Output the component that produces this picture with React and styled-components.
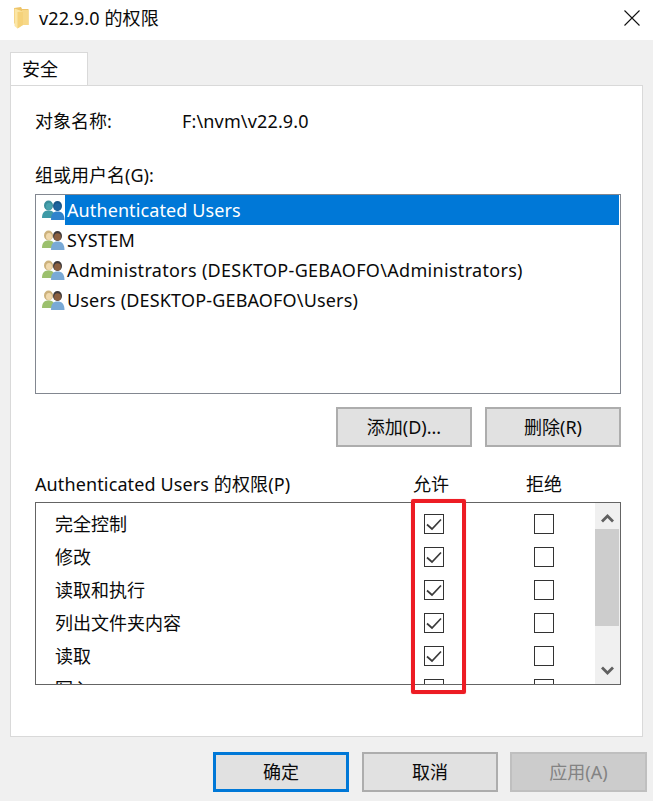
import React from 'react';
import styled, { createGlobalStyle } from 'styled-components';

const GlobalStyle = createGlobalStyle`
  html, body {
    margin: 0;
    padding: 0;
    background: #f0f0f0;
  }
  * {
    box-sizing: border-box;
  }
`;

const Dialog = styled.div`
  position: relative;
  width: 653px;
  height: 801px;
  overflow: hidden;
  background: #f0f0f0;
  color: #0a0a0a;
  font-family: 'Noto Sans', 'Noto Sans CJK SC', sans-serif;
  font-size: 18px;
`;

const TitleBar = styled.div`
  display: flex;
  align-items: center;
  height: 40px;
  padding: 0 13px 5px 14px;
  background: #fff;
`;

const TitleText = styled.span`
  flex: 1;
  margin-left: 10px;
  padding-bottom: 2px;
  letter-spacing: 0.1px;
`;

const TabStrip = styled.div`
  display: flex;
  height: 45px;
  padding: 12px 0 0 10px;
`;

const Tab = styled.div`
  width: 78px;
  height: 34px;
  padding-left: 11px;
  border: 1px solid #d9d9d9;
  border-bottom: 0;
  background: #fff;
  line-height: 33px;
`;

const Panel = styled.div`
  position: relative;
  width: 633px;
  height: 652px;
  margin-left: 10px;
  padding: 23px 21px 0 24px;
  border: 1px solid #d9d9d9;
  background: #fff;
`;

const Line = styled.div`
  height: 24px;
  margin-top: ${(p) => p.$top || 0}px;
  line-height: 24px;
`;

const ObjectName = styled(Line)`
  display: grid;
  grid-template-columns: 147px 1fr;
`;

const ObjectPath = styled.span`
  letter-spacing: 0.15px;
`;

const UserList = styled.div`
  height: 200px;
  margin-top: 7px;
  padding: 0 1px 0 6px;
  border: 1px solid #828790;
`;

const UserRow = styled.div`
  display: flex;
  align-items: center;
  height: 30px;
`;

const UserName = styled.div`
  flex: 1;
  height: 30px;
  padding-left: 2px;
  line-height: 30px;
  white-space: nowrap;
  letter-spacing: ${(p) => p.$tracking}px;
  background: ${(p) => (p.$selected ? '#0078d7' : 'transparent')};
  color: ${(p) => (p.$selected ? '#fff' : 'inherit')};
`;

const ListActions = styled.div`
  display: flex;
  justify-content: flex-end;
  gap: 13px;
  margin-top: 13px;
`;

const Button = styled.div`
  display: flex;
  align-items: center;
  justify-content: center;
  width: ${(p) => p.$width || 136}px;
  height: 40px;
  padding-bottom: 2px;
  border: 2px solid #adadad;
  background: #e1e1e1;
`;

const DefaultButton = styled(Button)`
  border-color: #0078d7;
  border-width: 3px;
`;

const DisabledButton = styled(Button)`
  margin-left: -1px;
  border-color: #bfbfbf;
  background: #cccccc;
  color: #838383;
`;

const PermHeader = styled.div`
  display: grid;
  grid-template-columns: 378px 36px 77px 36px;
  height: 24px;
  margin-top: 25px;
  line-height: 24px;
`;

const PermTitle = styled.span`
  letter-spacing: 0.12px;
`;

const PermTable = styled.div`
  display: flex;
  height: 183px;
  margin-top: 6px;
  border: 1px solid #646464;
`;

const PermRows = styled.div`
  flex: 1;
  display: flex;
  flex-direction: column;
  gap: 1px;
  padding-top: 5px;
  overflow: hidden;
`;

const PermRow = styled.div`
  flex: none;
  display: grid;
  grid-template-columns: 388px 20px 90px 20px;
  align-items: center;
  height: 32px;
`;

const PermName = styled.span`
  padding: 0 0 2px 19px;
`;

const CheckBox = styled.span`
  display: flex;
  align-items: center;
  justify-content: center;
  width: 20px;
  height: 20px;
  border: 1px solid #333;
  background: #fff;
`;

const ScrollBar = styled.div`
  flex: none;
  display: flex;
  flex-direction: column;
  align-items: flex-start;
  width: 25px;
  background: #f0f0f0;
`;

const ScrollArrow = styled.div`
  display: flex;
  align-items: ${(p) => (p.$down ? 'flex-end' : 'flex-start')};
  justify-content: center;
  width: 24px;
  height: ${(p) => p.$height}px;
  padding: ${(p) => (p.$down ? '0 0 9px' : '11px 0 0')};
`;

const ScrollThumb = styled.div`
  width: 24px;
  height: 97px;
  background: #cdcdcd;
`;

const Highlight = styled.div`
  position: absolute;
  left: 400px;
  top: 413px;
  width: 55px;
  height: 195px;
  border: 4px solid #ed1c24;
  border-radius: 2px;
  box-shadow: 0 0 1px rgba(237, 28, 36, 0.5);
`;

const Footer = styled.div`
  display: flex;
  justify-content: flex-end;
  gap: 13px;
  margin-top: 15px;
  padding-right: 6px;
`;

const FolderIcon = () => (
  <svg width="15" height="22" viewBox="0 0 15 22">
    <path d="M0 1 L7 0 L8 2 L14.5 2 L14.5 18 L2 18 L0 16 Z" fill="#eec468" />
    <path d="M8 3 L14.5 3 L14.5 18 L8 18 Z" fill="#f7d888" />
    <path d="M0.5 1.5 L9 4.5 L9 18 L3.5 21.5 L0.5 19 Z" fill="#fbe6a6" />
    <path d="M3.5 5 L9 4.5 L9 18 L3.5 21.5 Z" fill="#f5d27a" />
  </svg>
);

const CloseIcon = () => (
  <svg width="16" height="16" viewBox="0 0 16 16">
    <path d="M0.5 0.5 L15.5 15.5 M15.5 0.5 L0.5 15.5" stroke="#111" strokeWidth="1.1" fill="none" />
  </svg>
);

const GroupIcon = ({ selected }) => {
  const leftBody = selected ? '#3e9aa6' : '#9cc06e';
  const leftHair = selected ? '#3a8f9c' : '#cdb27c';
  const leftFace = selected ? '#4aa3ae' : '#f0d9ae';
  const rightBody = selected ? '#2f83cc' : '#79a9d6';
  const rightHair = selected ? '#1a5688' : '#3f3a3a';
  const rightFace = selected ? '#1f649e' : '#8a5f3f';
  return (
    <svg width="23" height="20" viewBox="0 0 23 20">
      <ellipse cx="6.5" cy="5.5" rx="4.5" ry="5" fill={leftHair} />
      <ellipse cx="7" cy="6.5" rx="3" ry="3.5" fill={leftFace} />
      <path d="M0 18 C0 12 3 10.5 6.5 10.5 C10 10.5 13 12 13 18 Z" fill={leftBody} />
      <ellipse cx="15.5" cy="6" rx="4.5" ry="5" fill={rightHair} />
      <ellipse cx="15.5" cy="7" rx="3.4" ry="3.8" fill={rightFace} />
      <path d="M9 20 C9 14 11 11.5 15.5 11.5 C20 11.5 22.5 14 22.5 20 Z" fill={rightBody} />
    </svg>
  );
};

const CheckMark = () => (
  <svg width="18" height="18" viewBox="0 0 18 18">
    <path d="M2 9.5 L7 14 L16 4.5" stroke="#3a3a3a" strokeWidth="1.7" fill="none" />
  </svg>
);

const Chevron = ({ down }) => (
  <svg width="13" height="9" viewBox="0 0 13 9">
    <path d={down ? 'M1 1.5 L6.5 7 L12 1.5' : 'M1 7.5 L6.5 2 L12 7.5'} stroke="#606060" strokeWidth="2.8" fill="none" />
  </svg>
);

const users = [
  { name: 'Authenticated Users', selected: true, tracking: 0.1 },
  { name: 'SYSTEM', tracking: 0.3 },
  { name: 'Administrators (DESKTOP-GEBAOFO\\Administrators)', tracking: 0.31 },
  { name: 'Users (DESKTOP-GEBAOFO\\Users)', tracking: 0.17 },
];

const permissions = [
  { name: '完全控制', allow: true },
  { name: '修改', allow: true },
  { name: '读取和执行', allow: true },
  { name: '列出文件夹内容', allow: true },
  { name: '读取', allow: true },
  { name: '写入', allow: false },
];

const App = () => {
  return (
    <Dialog>
      <GlobalStyle />
      <TitleBar>
        <FolderIcon />
        <TitleText>v22.9.0 的权限</TitleText>
        <CloseIcon />
      </TitleBar>
      <TabStrip>
        <Tab>安全</Tab>
      </TabStrip>
      <Panel>
        <ObjectName>
          <span>对象名称:</span>
          <ObjectPath>F:\nvm\v22.9.0</ObjectPath>
        </ObjectName>
        <Line $top={30}>组或用户名(G):</Line>
        <UserList>
          {users.map((user) => (
            <UserRow key={user.name}>
              <GroupIcon selected={user.selected} />
              <UserName $selected={user.selected} $tracking={user.tracking}>
                {user.name}
              </UserName>
            </UserRow>
          ))}
        </UserList>
        <ListActions>
          <Button>添加(D)...</Button>
          <Button>删除(R)</Button>
        </ListActions>
        <PermHeader>
          <PermTitle>Authenticated Users 的权限(P)</PermTitle>
          <span>允许</span>
          <span />
          <span>拒绝</span>
        </PermHeader>
        <PermTable>
          <PermRows>
            {permissions.map((perm) => (
              <PermRow key={perm.name}>
                <PermName>{perm.name}</PermName>
                <CheckBox>{perm.allow && <CheckMark />}</CheckBox>
                <span />
                <CheckBox />
              </PermRow>
            ))}
          </PermRows>
          <ScrollBar>
            <ScrollArrow $height={26}>
              <Chevron />
            </ScrollArrow>
            <ScrollThumb />
            <ScrollArrow $height={58} $down>
              <Chevron down />
            </ScrollArrow>
          </ScrollBar>
        </PermTable>
        <Highlight />
      </Panel>
      <Footer>
        <DefaultButton>确定</DefaultButton>
        <Button>取消</Button>
        <DisabledButton $width={137}>应用(A)</DisabledButton>
      </Footer>
    </Dialog>
  );
};

export default App;
